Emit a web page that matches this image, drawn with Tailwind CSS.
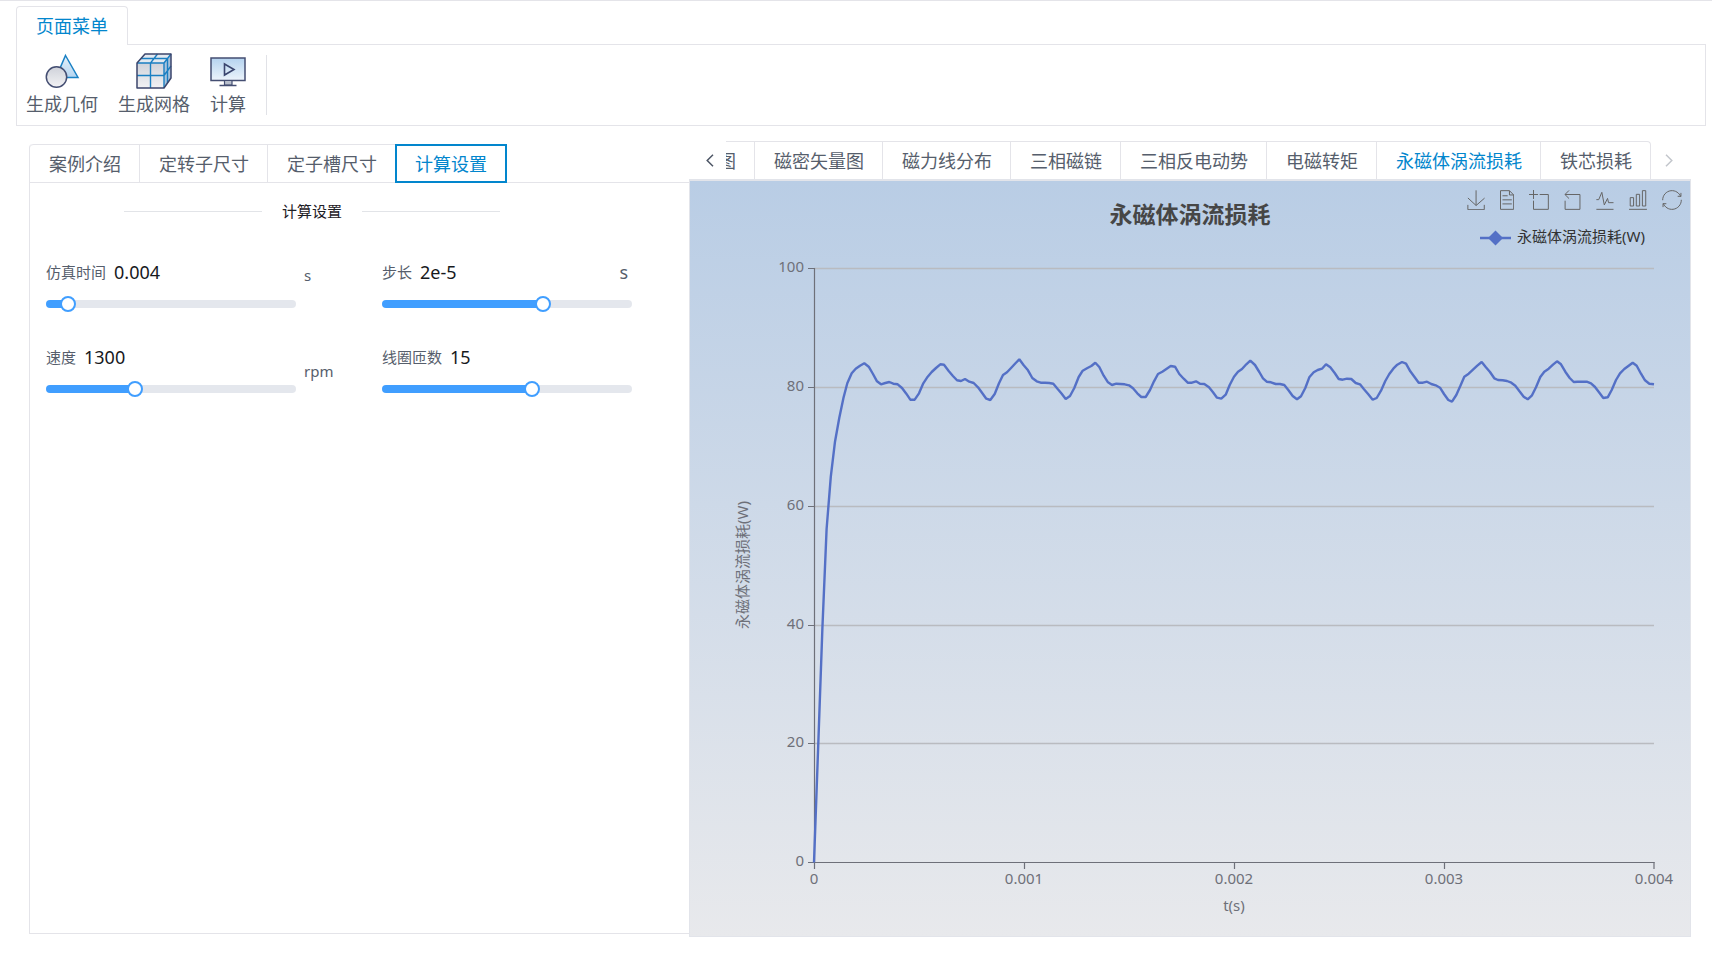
<!DOCTYPE html>
<html lang="zh-CN">
<head>
<meta charset="utf-8">
<meta name="viewport" content="width=device-width, initial-scale=1">
<title>永磁体涡流损耗</title>
<script src="https://cdn.jsdelivr.net/npm/@tailwindcss/browser@4"></script>
</head>
<body class="min-h-screen border-t border-[#e4e4e9] bg-white font-['Noto_Sans','Noto_Sans_CJK_SC',sans-serif] font-normal text-[#565e6c]">

<header class="pt-[5px] pr-[6px] pl-4">
  <nav class="flex">
    <a href="#menu" class="relative z-10 -mb-px flex h-[39px] items-center rounded-t border border-b-0 border-[#e4e4e9] bg-white px-[19px] text-[18px] leading-6 text-[#0286cd]">页面菜单</a>
  </nav>
  <div id="menu" class="flex h-[82px] items-start gap-5 border border-[#e4e4e9] pt-2 pl-[9px] text-[18px] leading-6">
    <button type="button" class="flex flex-col items-center gap-[3px]">
      <svg class="size-9" viewBox="0 0 36 36" fill="none" aria-hidden="true">
        <defs>
          <linearGradient id="gTri" x1="0" y1="0" x2="0" y2="1"><stop offset="0" stop-color="#e6f1fa"/><stop offset="1" stop-color="#b5d5f0"/></linearGradient>
          <linearGradient id="gGray" x1="0" y1="0" x2="0" y2="1"><stop offset="0" stop-color="#cfd2da"/><stop offset="1" stop-color="#f2f2f4"/></linearGradient>
        </defs>
        <path d="M21.5 2.500 34 24.500H12Z" fill="url(#gTri)" stroke="#1a80c4" stroke-width="1.500"/>
        <circle cx="12.500" cy="24" r="10.200" fill="url(#gGray)" stroke="#444e72" stroke-width="1.500"/>
      </svg>
      <span>生成几何</span>
    </button>
    <button type="button" class="flex flex-col items-center gap-[3px]">
      <svg class="size-9" viewBox="0 0 36 36" fill="none" aria-hidden="true">
        <path d="M1 10 9 1H35L28 10Z" fill="#e3e9f0"/>
        <path d="M1 10H28V35H1Z" fill="url(#gGray)"/>
        <path d="M28 10 35 1V25L28 35Z" fill="#a9c3dc"/>
        <path d="M5 5.500H31.500V30M21.500 1 14.500 10V35M1 22.500H28L35 13M1 10H28V35M28 10 35 1" stroke="#1a7fc2" stroke-width="1.400"/>
        <path d="M1 10 9 1H35V25L28 35H1Z" stroke="#3c466c" stroke-width="1.500" stroke-linejoin="round"/>
      </svg>
      <span>生成网格</span>
    </button>
    <button type="button" class="flex flex-col items-center gap-[3px]">
      <svg class="size-9" viewBox="0 0 36 36" fill="none" aria-hidden="true">
        <defs><linearGradient id="gScr" x1="0" y1="0" x2="0" y2="1"><stop offset="0" stop-color="#b4d3ef"/><stop offset="1" stop-color="#edf4fb"/></linearGradient></defs>
        <path d="M1 5H35V27.500H1Z" fill="url(#gScr)" stroke="#444e72" stroke-width="1.500"/>
        <path d="M14.500 28V32H22V28" fill="#b9bfcc" stroke="#444e72" stroke-width="1.200"/>
        <path d="M9.500 32.500H26.500" stroke="#444e72" stroke-width="1.500"/>
        <path d="M14.500 11 24 16.500 14.500 22Z" stroke="#3a456e" stroke-width="1.600"/>
      </svg>
      <span>计算</span>
    </button>
    <div class="mt-[2px] h-[60px] w-px bg-[#e1e2e7]"></div>
  </div>
</header>

<main class="grid grid-cols-[660fr_1002fr] pt-[15px] pr-[21px] pl-[29px]">
  <section class="mt-[3px] mb-[3px] rounded-tl border-b border-l border-[#e4e4e9]">
    <nav class="flex h-[39px] border-b border-[#e4e4e9] text-[18px] leading-6">
      <a href="#intro" class="flex items-center rounded-tl border-t border-r border-[#e4e4e9] pr-[18px] pl-[19px]">案例介绍</a>
      <a href="#stator" class="flex items-center border-t border-r border-[#e4e4e9] pr-[18px] pl-[19px]">定转子尺寸</a>
      <a href="#slot" class="flex items-center border-t border-[#e4e4e9] pr-[18px] pl-[19px]">定子槽尺寸</a>
      <a href="#calc" class="-mb-px flex items-center border-2 border-[#0286cd] px-[18px] text-[#0286cd]">计算设置</a>
    </nav>
    <form id="calc" class="pr-14 pl-4">
      <h2 class="mt-4 ml-[78px] flex w-[376px] items-center gap-5 text-[15px] leading-6 font-normal text-[#1d2026] before:h-px before:flex-1 before:bg-[#e2e4e8] after:h-px after:flex-1 after:bg-[#e2e4e8]">计算设置</h2>
      <div class="mt-[37px] grid grid-cols-[336px_250px] gap-y-[33px] text-[15px] leading-6">
        <div class="flex gap-2">
          <div class="w-[250px]">
            <div class="flex items-center gap-2"><label for="time">仿真时间</label><output for="time" class="text-[18px] text-[#17191d]">0.004</output></div>
            <input id="time" type="range" min="0" max="100" step="any" value="5.8" class="mt-3 block h-4 w-full appearance-none bg-transparent [&::-webkit-slider-runnable-track]:h-2 [&::-webkit-slider-runnable-track]:rounded [&::-webkit-slider-runnable-track]:bg-(image:--fill) [&::-webkit-slider-thumb]:-mt-1 [&::-webkit-slider-thumb]:size-4 [&::-webkit-slider-thumb]:appearance-none [&::-webkit-slider-thumb]:rounded-full [&::-webkit-slider-thumb]:border-2 [&::-webkit-slider-thumb]:border-[#409eff] [&::-webkit-slider-thumb]:bg-white" style="--fill:linear-gradient(90deg,#409eff 9%,#e4e7ed 9%)">
          </div>
          <span class="pt-[3px]">s</span>
        </div>
        <div>
          <div class="flex items-center gap-2"><label for="step">步长</label><output for="step" class="text-[18px] text-[#17191d]">2e-5</output><span class="mr-1 ml-auto text-[18px]">s</span></div>
          <input id="step" type="range" min="0" max="100" step="any" value="65.4" class="mt-3 block h-4 w-full appearance-none bg-transparent [&::-webkit-slider-runnable-track]:h-2 [&::-webkit-slider-runnable-track]:rounded [&::-webkit-slider-runnable-track]:bg-(image:--fill) [&::-webkit-slider-thumb]:-mt-1 [&::-webkit-slider-thumb]:size-4 [&::-webkit-slider-thumb]:appearance-none [&::-webkit-slider-thumb]:rounded-full [&::-webkit-slider-thumb]:border-2 [&::-webkit-slider-thumb]:border-[#409eff] [&::-webkit-slider-thumb]:bg-white" style="--fill:linear-gradient(90deg,#409eff 64%,#e4e7ed 64%)">
        </div>
        <div class="flex gap-2">
          <div class="w-[250px]">
            <div class="flex items-center gap-2"><label for="speed">速度</label><output for="speed" class="text-[18px] text-[#17191d]">1300</output></div>
            <input id="speed" type="range" min="0" max="100" step="any" value="34.6" class="mt-3 block h-4 w-full appearance-none bg-transparent [&::-webkit-slider-runnable-track]:h-2 [&::-webkit-slider-runnable-track]:rounded [&::-webkit-slider-runnable-track]:bg-(image:--fill) [&::-webkit-slider-thumb]:-mt-1 [&::-webkit-slider-thumb]:size-4 [&::-webkit-slider-thumb]:appearance-none [&::-webkit-slider-thumb]:rounded-full [&::-webkit-slider-thumb]:border-2 [&::-webkit-slider-thumb]:border-[#409eff] [&::-webkit-slider-thumb]:bg-white" style="--fill:linear-gradient(90deg,#409eff 36%,#e4e7ed 36%)">
          </div>
          <span class="pt-[14px]">rpm</span>
        </div>
        <div>
          <div class="flex items-center gap-2"><label for="turns">线圈匝数</label><output for="turns" class="text-[18px] text-[#17191d]">15</output></div>
          <input id="turns" type="range" min="0" max="100" step="any" value="60.7" class="mt-3 block h-4 w-full appearance-none bg-transparent [&::-webkit-slider-runnable-track]:h-2 [&::-webkit-slider-runnable-track]:rounded [&::-webkit-slider-runnable-track]:bg-(image:--fill) [&::-webkit-slider-thumb]:-mt-1 [&::-webkit-slider-thumb]:size-4 [&::-webkit-slider-thumb]:appearance-none [&::-webkit-slider-thumb]:rounded-full [&::-webkit-slider-thumb]:border-2 [&::-webkit-slider-thumb]:border-[#409eff] [&::-webkit-slider-thumb]:bg-white" style="--fill:linear-gradient(90deg,#409eff 60%,#e4e7ed 60%)">
        </div>
      </div>
    </form>
  </section>

  <section class="min-w-0">
    <div class="flex h-[38px] text-[18px] leading-6">
      <button type="button" aria-label="向左" class="flex w-[37px] shrink-0 items-center justify-center pl-1">
        <svg class="h-[13px] w-2" viewBox="0 0 8 13" fill="none" stroke="#4d5666" stroke-width="1.500" aria-hidden="true"><path d="M7 .7 1.200 6.500 7 12.300"/></svg>
      </button>
      <nav class="flex min-w-0 flex-1 justify-end overflow-hidden rounded-tr border-t border-r border-[#e4e4e9]">
        <a href="#t1" class="flex shrink-0 items-center pr-[18px] pl-[19px]">磁密云图</a>
        <a href="#t2" class="flex shrink-0 items-center border-l border-[#e4e4e9] pr-[18px] pl-[19px]">磁密矢量图</a>
        <a href="#t3" class="flex shrink-0 items-center border-l border-[#e4e4e9] pr-[18px] pl-[19px]">磁力线分布</a>
        <a href="#t4" class="flex shrink-0 items-center border-l border-[#e4e4e9] pr-[18px] pl-[19px]">三相磁链</a>
        <a href="#t5" class="flex shrink-0 items-center border-l border-[#e4e4e9] pr-[18px] pl-[19px]">三相反电动势</a>
        <a href="#t6" class="flex shrink-0 items-center border-l border-[#e4e4e9] pr-[18px] pl-[19px]">电磁转矩</a>
        <a href="#chart" class="flex shrink-0 items-center border-l border-[#e4e4e9] pr-[18px] pl-[19px] text-[#0286cd]">永磁体涡流损耗</a>
        <a href="#t8" class="flex shrink-0 items-center border-l border-[#e4e4e9] pr-[18px] pl-[19px]">铁芯损耗</a>
      </nav>
      <button type="button" aria-label="向右" class="flex w-10 shrink-0 items-center justify-center pr-1">
        <svg class="h-[13px] w-2" viewBox="0 0 8 13" fill="none" stroke="#c3c6cc" stroke-width="1.500" aria-hidden="true"><path d="M1 .7 6.800 6.500 1 12.300"/></svg>
      </button>
    </div>
    <div id="chart" class="relative border border-t-2 border-[#e2e4ea] bg-linear-to-b from-[#b9cde5] to-[#e8e9ec]">
      <svg class="block w-full" viewBox="0 0 1000 755" role="img" aria-label="永磁体涡流损耗" font-size="15" font-weight="400">
        <g stroke="#b9bbc0" stroke-width="1.400">
          <path d="M124 87.500H964M124 206.500H964M124 325.500H964M124 444.500H964M124 562.500H964"/>
        </g>
        <g stroke="#6e7079" stroke-width="1.200">
          <path d="M124.500 87V682M124 681.500H964.500"/>
          <path d="M118 87.500H124M118 206.500H124M118 325.500H124M118 444.500H124M118 562.500H124M118 681.500H124"/>
          <path d="M124.500 681V688M334.500 681V688M544.500 681V688M754.500 681V688M964 681V688"/>
        </g>
        <g fill="#6e7079" text-anchor="end">
          <text x="114" y="91">100</text><text x="114" y="210">80</text><text x="114" y="329">60</text>
          <text x="114" y="448">40</text><text x="114" y="566">20</text><text x="114" y="685">0</text>
        </g>
        <g fill="#6e7079" text-anchor="middle">
          <text x="124" y="703">0</text><text x="334" y="703">0.001</text><text x="544" y="703">0.002</text>
          <text x="754" y="703">0.003</text><text x="964" y="703">0.004</text>
          <text x="544" y="730">t(s)</text>
          <text transform="translate(58 384) rotate(-90)">永磁体涡流损耗(W)</text>
        </g>
        <text x="500" y="42" fill="#464646" text-anchor="middle" font-size="23" font-weight="700">永磁体涡流损耗</text>
        <path d="M790 57H821" stroke="#5470c6" stroke-width="2.500"/>
        <path d="M805.500 49.500 813 57 805.500 64.500 798 57Z" fill="#5470c6"/>
        <text x="827" y="61" fill="#333">永磁体涡流损耗(W)</text>
        <polyline fill="none" stroke="#5470c6" stroke-width="2.400" stroke-linejoin="bevel" points="124,681.5 128.200,565 132.400,447 136.600,348 140.800,295.700 145,260.700 149.300,236.700 153.500,216.700 157.300,202.300 161.700,192.300 165.700,187.700 170,184.700 174.300,182.300 178.700,185.700 183,193 187,200.300 191,203.300 195.300,202 199.300,201 203.300,202.700 207.700,203.300 212,207 216.300,212.700 220.300,218.700 224.700,218.700 229,212.300 233.300,202.300 237.700,195.700 241.700,191 246,187 250.300,183.300 254,183.700 258.700,190 262.700,194.700 267,199.300 271,200 275,198 279.300,200.700 283.700,202 288,206.300 292,211.700 296.300,217.700 300.300,219 304.700,213 309,202.300 313,194 317,191.300 321.300,186.700 325.700,182 329.300,178.300 333.700,184.300 338,189.300 342.300,197 346.700,200.300 350.700,201.700 355,201.700 359.300,202 363.300,202.700 367.700,208 371.700,212.700 375.700,218 380,215 384.300,207 388.700,196 392.700,189.700 397,187.300 401.300,185 405.300,181.700 409.300,186 413.700,194.700 418,201.300 422,204 426.300,202.700 434.700,203.300 439,204.300 443,207.300 447.300,212.300 451.300,216 455.700,216 460,209 464,200.300 468,193 472.300,190.700 476.700,187.700 480.700,185 485,185.700 489.300,193 493.700,197.700 497.700,201.700 502,201.700 506,200.300 510,202.700 514.300,203 519,206.300 523,211.300 527,216.700 531.300,217.700 535.700,213.700 539.700,204 544,195.700 548,190.700 552,188 556.300,183.300 560.300,179.700 565,184 569.300,191 573,197.300 576.700,200.700 581,201.300 585.700,203 590,203 594.300,204 598.300,209 602.700,215 607,218.300 611,215.300 615.300,207 619.300,196.300 623.700,191.300 627.700,189 632,187.700 636,183.300 640.300,186.300 644.700,192 648.700,198 652.700,198.700 657,197.700 661.300,198 665.700,202 670,203.300 674,208.300 678.300,213.300 682.700,218.700 686.700,217 691,209.700 695.300,200 699.300,193 703.300,187.700 707.300,183.700 712,181 716,182.700 720.300,190.300 724.700,196.300 728.700,201.700 733,201.700 737,200.700 741.300,203 745.700,204.300 750,206.700 754,213 758.300,219 762,220.700 766.300,214 770.300,205 774.300,195.700 778.700,192.700 783,188.700 787.300,184.700 791.700,181 795.700,186 800,191 804.300,197.300 808,199 812.700,199.300 817,200 821.300,201.700 825.300,204.700 829.300,210 833.700,215.700 837.700,218.300 842,214.300 846,206.300 850.300,196 854.300,190.700 858.700,187.700 863,183.700 867,180.300 871,183.300 875.300,190.700 879.700,197 883.700,201 887.700,200.700 896.700,200.700 901,202.300 905,206 909,211.300 913.300,217 917.700,216.300 921.700,209 926,199 930,192.300 934.300,188 938.700,184.700 942.700,181.700 946.700,184.700 951,192.700 955,199.300 959.300,202.700 964,203.300"/>
      </svg>
      <div class="absolute top-[9px] right-2 flex gap-[15px]">
        <button type="button" aria-label="保存为图片"><svg class="h-5 w-[18px]" viewBox="2 -1 54 60" fill="none" stroke="#666" stroke-width="3" aria-hidden="true"><path d="M4.700,22.900L29.300,45.500L54.700,23.400M4.600,43.600L4.600,58L53.800,58L53.800,43.600M29.200,45.100L29.200,0"/></svg></button>
        <button type="button" aria-label="数据视图"><svg class="h-5 w-[14px]" viewBox="10 0 42 60" fill="none" stroke="#666" stroke-width="3" aria-hidden="true"><path d="M17.500,17.300H33M45.400,29.500h-28M11.500,2v56H51V14.800L38.400,2H11.500zM38.400,2.200v12.700H51M45.400,41.700h-28"/></svg></button>
        <button type="button" aria-label="区域缩放"><svg class="size-5" viewBox="0 0 60 60" fill="none" stroke="#666" stroke-width="3" aria-hidden="true"><path d="M0,13.500h26.900M13.500,26.900V0M32.100,13.500H58V58H13.500V32.100"/></svg></button>
        <button type="button" aria-label="区域缩放还原"><svg class="h-5 w-[17px]" viewBox="7 0 51 60" fill="none" stroke="#666" stroke-width="3" aria-hidden="true"><path d="M22,1.400L9.900,13.500l12.300,12.300M10.300,13.500H54.900v44.600H10.300v-26"/></svg></button>
        <button type="button" aria-label="切换为折线图"><svg class="h-5 w-[18px]" viewBox="3 0 54 60" fill="none" stroke="#666" stroke-width="3" aria-hidden="true"><path d="M4.100,28.900h7.100l9.300-22l7.400,38l9.700-19.700l3,12.800h14.900M4.100,58h51.400"/></svg></button>
        <button type="button" aria-label="切换为柱状图"><svg class="h-5 w-[18px]" viewBox="3 0 54 60" fill="none" stroke="#666" stroke-width="3" aria-hidden="true"><path d="M6.700,22.900h10V48h-10V22.900zM24.900,13h10v35h-10V13zM43.200,2h10v46h-10V2zM3.100,58h53.700"/></svg></button>
        <button type="button" aria-label="还原"><svg class="size-5" viewBox="0 0 60 60" fill="none" stroke="#666" stroke-width="3" aria-hidden="true"><path d="M47,18.900h9.800V8.700M56.300,20.100C52.100,9,40.500,0.600,26.800,2.100C12.600,3.700,1.600,16.200,2.100,30.600M13,41.100H3.100v10.200M3.700,39.900c4.200,11.100,15.800,19.500,29.500,18c14.200-1.600,25.200-14.100,24.700-28.500"/></svg></button>
      </div>
    </div>
  </section>
</main>
</body>
</html>
